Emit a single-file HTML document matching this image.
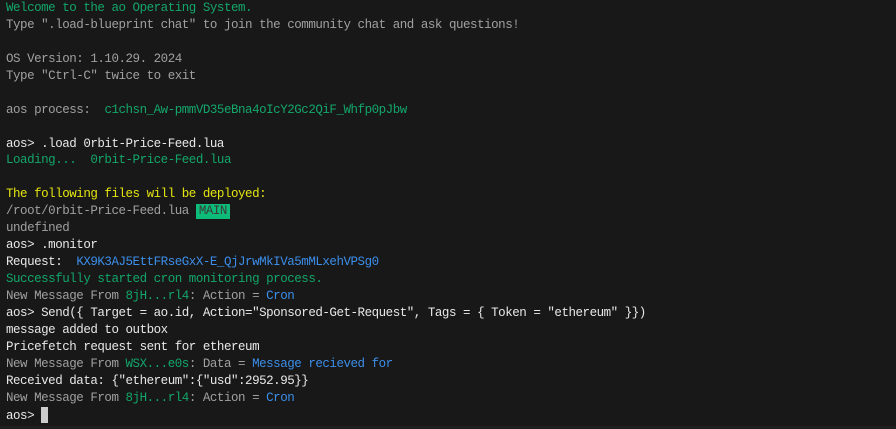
<!DOCTYPE html>
<html><head><meta charset="utf-8"><style>
html,body{margin:0;padding:0;background:#181818;width:896px;height:429px;overflow:hidden}
pre{margin:0;position:absolute;left:6px;top:0px;font-family:"Liberation Mono",monospace;font-size:12.5px;letter-spacing:-0.47px;line-height:16.93px;color:#cccccc;white-space:pre}
.g{color:#13a66a}.d{color:#a0a0a0}.y{color:#e5e510}.b{color:#3b8eea}.w{color:#e8e8e8}
.m{background:#0dbc79;color:#3a3a3a;padding:0 3px 1px 3px}
.c{display:inline-block;width:7px;height:16px;background:#cccccc;vertical-align:-4px}
.bar{position:absolute;left:0;top:426px;width:896px;height:3px;background:#1f1f1f}
</style></head><body><pre><span class="g">Welcome to the ao Operating System.</span>
<span class="d">Type ".load-blueprint chat" to join the community chat and ask questions!</span>

<span class="d">OS Version: 1.10.29. 2024</span>
<span class="d">Type "Ctrl-C" twice to exit</span>

<span class="d">aos process:  </span><span class="g">c1chsn_Aw-pmmVD35eBna4oIcY2Gc2QiF_Whfp0pJbw</span>

<span class="w">aos&gt; .load 0rbit-Price-Feed.lua</span>
<span class="g">Loading...  0rbit-Price-Feed.lua</span>

<span class="y">The following files will be deployed:</span>
<span class="d">/root/0rbit-Price-Feed.lua </span><span class="m">MAIN</span>
<span class="d">undefined</span>
<span class="w">aos&gt; .monitor</span>
<span class="w">Request:  </span><span class="b">KX9K3AJ5EttFRseGxX-E_QjJrwMkIVa5mMLxehVPSg0</span>
<span class="g">Successfully started cron monitoring process.</span>
<span class="d">New Message From </span><span class="g">8jH...rl4</span><span class="d">: Action = </span><span class="b">Cron</span>
<span class="w">aos&gt; Send({ Target = ao.id, Action="Sponsored-Get-Request", Tags = { Token = "ethereum" }})</span>
<span class="w">message added to outbox</span>
<span class="w">Pricefetch request sent for ethereum</span>
<span class="d">New Message From </span><span class="g">WSX...e0s</span><span class="d">: Data = </span><span class="b">Message recieved for</span>
<span class="w">Received data: {"ethereum":{"usd":2952.95}}</span>
<span class="d">New Message From </span><span class="g">8jH...rl4</span><span class="d">: Action = </span><span class="b">Cron</span>
<span class="w">aos&gt; </span><span class="c"></span></pre><div class="bar"></div></body></html>
